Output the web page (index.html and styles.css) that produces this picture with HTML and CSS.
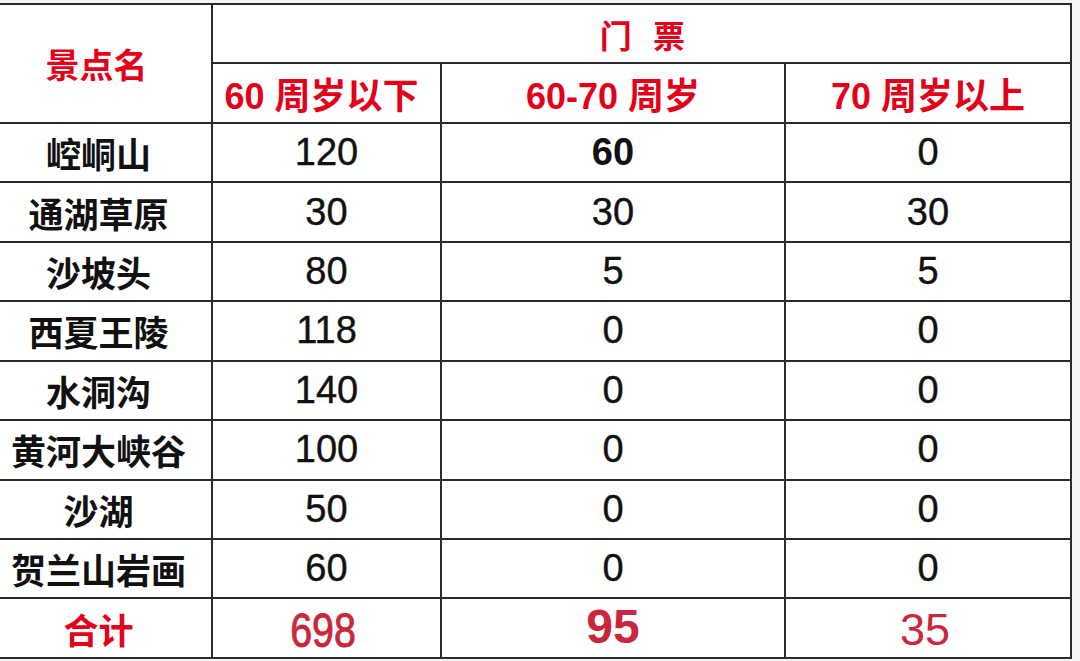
FILE: index.html
```html
<!DOCTYPE html>
<html lang="zh-CN">
<head>
<meta charset="utf-8">
<title>门票</title>
<link rel="stylesheet" href="styles.css">
</head>
<body>
<div class="sheet">
  <div class="cell name head span-rows">景点名</div>
  <div class="cell head span-cols ticket">门 票</div>
  <div class="cell head sub first">60 周岁以下</div>
  <div class="cell head sub">60-70 周岁</div>
  <div class="cell head sub">70 周岁以上</div>

  <div class="cell name">崆峒山</div>
  <div class="cell num">120</div>
  <div class="cell num bold">60</div>
  <div class="cell num">0</div>

  <div class="cell name">通湖草原</div>
  <div class="cell num">30</div>
  <div class="cell num">30</div>
  <div class="cell num">30</div>

  <div class="cell name">沙坡头</div>
  <div class="cell num">80</div>
  <div class="cell num">5</div>
  <div class="cell num">5</div>

  <div class="cell name">西夏王陵</div>
  <div class="cell num">118</div>
  <div class="cell num">0</div>
  <div class="cell num">0</div>

  <div class="cell name">水洞沟</div>
  <div class="cell num">140</div>
  <div class="cell num">0</div>
  <div class="cell num">0</div>

  <div class="cell name">黄河大峡谷</div>
  <div class="cell num">100</div>
  <div class="cell num">0</div>
  <div class="cell num">0</div>

  <div class="cell name">沙湖</div>
  <div class="cell num">50</div>
  <div class="cell num">0</div>
  <div class="cell num">0</div>

  <div class="cell name">贺兰山岩画</div>
  <div class="cell num">60</div>
  <div class="cell num">0</div>
  <div class="cell num">0</div>

  <div class="cell name head">合计</div>
  <div class="cell total"><span class="total-narrow">698</span></div>
  <div class="cell total total-bold">95</div>
  <div class="cell total total-light">35</div>
</div>
</body>
</html>
```

FILE: styles.css
```css
html, body {
  margin: 0;
  padding: 0;
  background: #f6f6f6;
  overflow: hidden;
}

.sheet {
  display: grid;
  grid-template-columns: 211px 227px 342px 284px;
  grid-auto-rows: 57.45px;
  gap: 2px;
  background: #2b2b2b;
  border: 2px solid #2b2b2b;
  width: max-content;
  margin: 3px 0 0 -2px;
}

.cell {
  background: #ffffff;
  display: flex;
  align-items: center;
  justify-content: center;
  white-space: nowrap;
  font-family: "Liberation Sans", "Noto Sans CJK SC", sans-serif;
  color: #111111;
}

.name {
  font-family: "Noto Sans CJK SC", sans-serif;
  font-weight: 700;
  font-size: 35px;
  padding-right: 14px;
}

.head {
  color: #e5001a;
  font-weight: 700;
}

.span-rows {
  grid-row: span 2;
  font-size: 34px;
  padding-right: 18px;
}

.span-cols {
  grid-column: span 3;
}

.ticket {
  font-family: "Noto Sans CJK SC", sans-serif;
  font-size: 32px;
  word-spacing: 14px;
  padding-left: 2px;
}

.sub {
  font-family: "Liberation Sans", "Noto Sans CJK SC", sans-serif;
  font-size: 36px;
}

.sub.first {
  padding-right: 10px;
}

.num {
  font-size: 38px;
  -webkit-text-stroke: 0.4px #111111;
}

.bold {
  font-weight: 700;
  -webkit-text-stroke: 0;
}

.total {
  color: #c8273d;
  font-size: 48px;
}

.total-narrow {
  display: inline-block;
  transform: scaleX(0.82);
  margin-right: 6px;
  margin-top: 4px;
  -webkit-text-stroke: 0.9px #c8273d;
}

.total-bold {
  font-weight: 700;
  padding-bottom: 4px;
}

.total-light {
  font-size: 45px;
  padding-top: 4px;
  padding-right: 6px;
}
```
